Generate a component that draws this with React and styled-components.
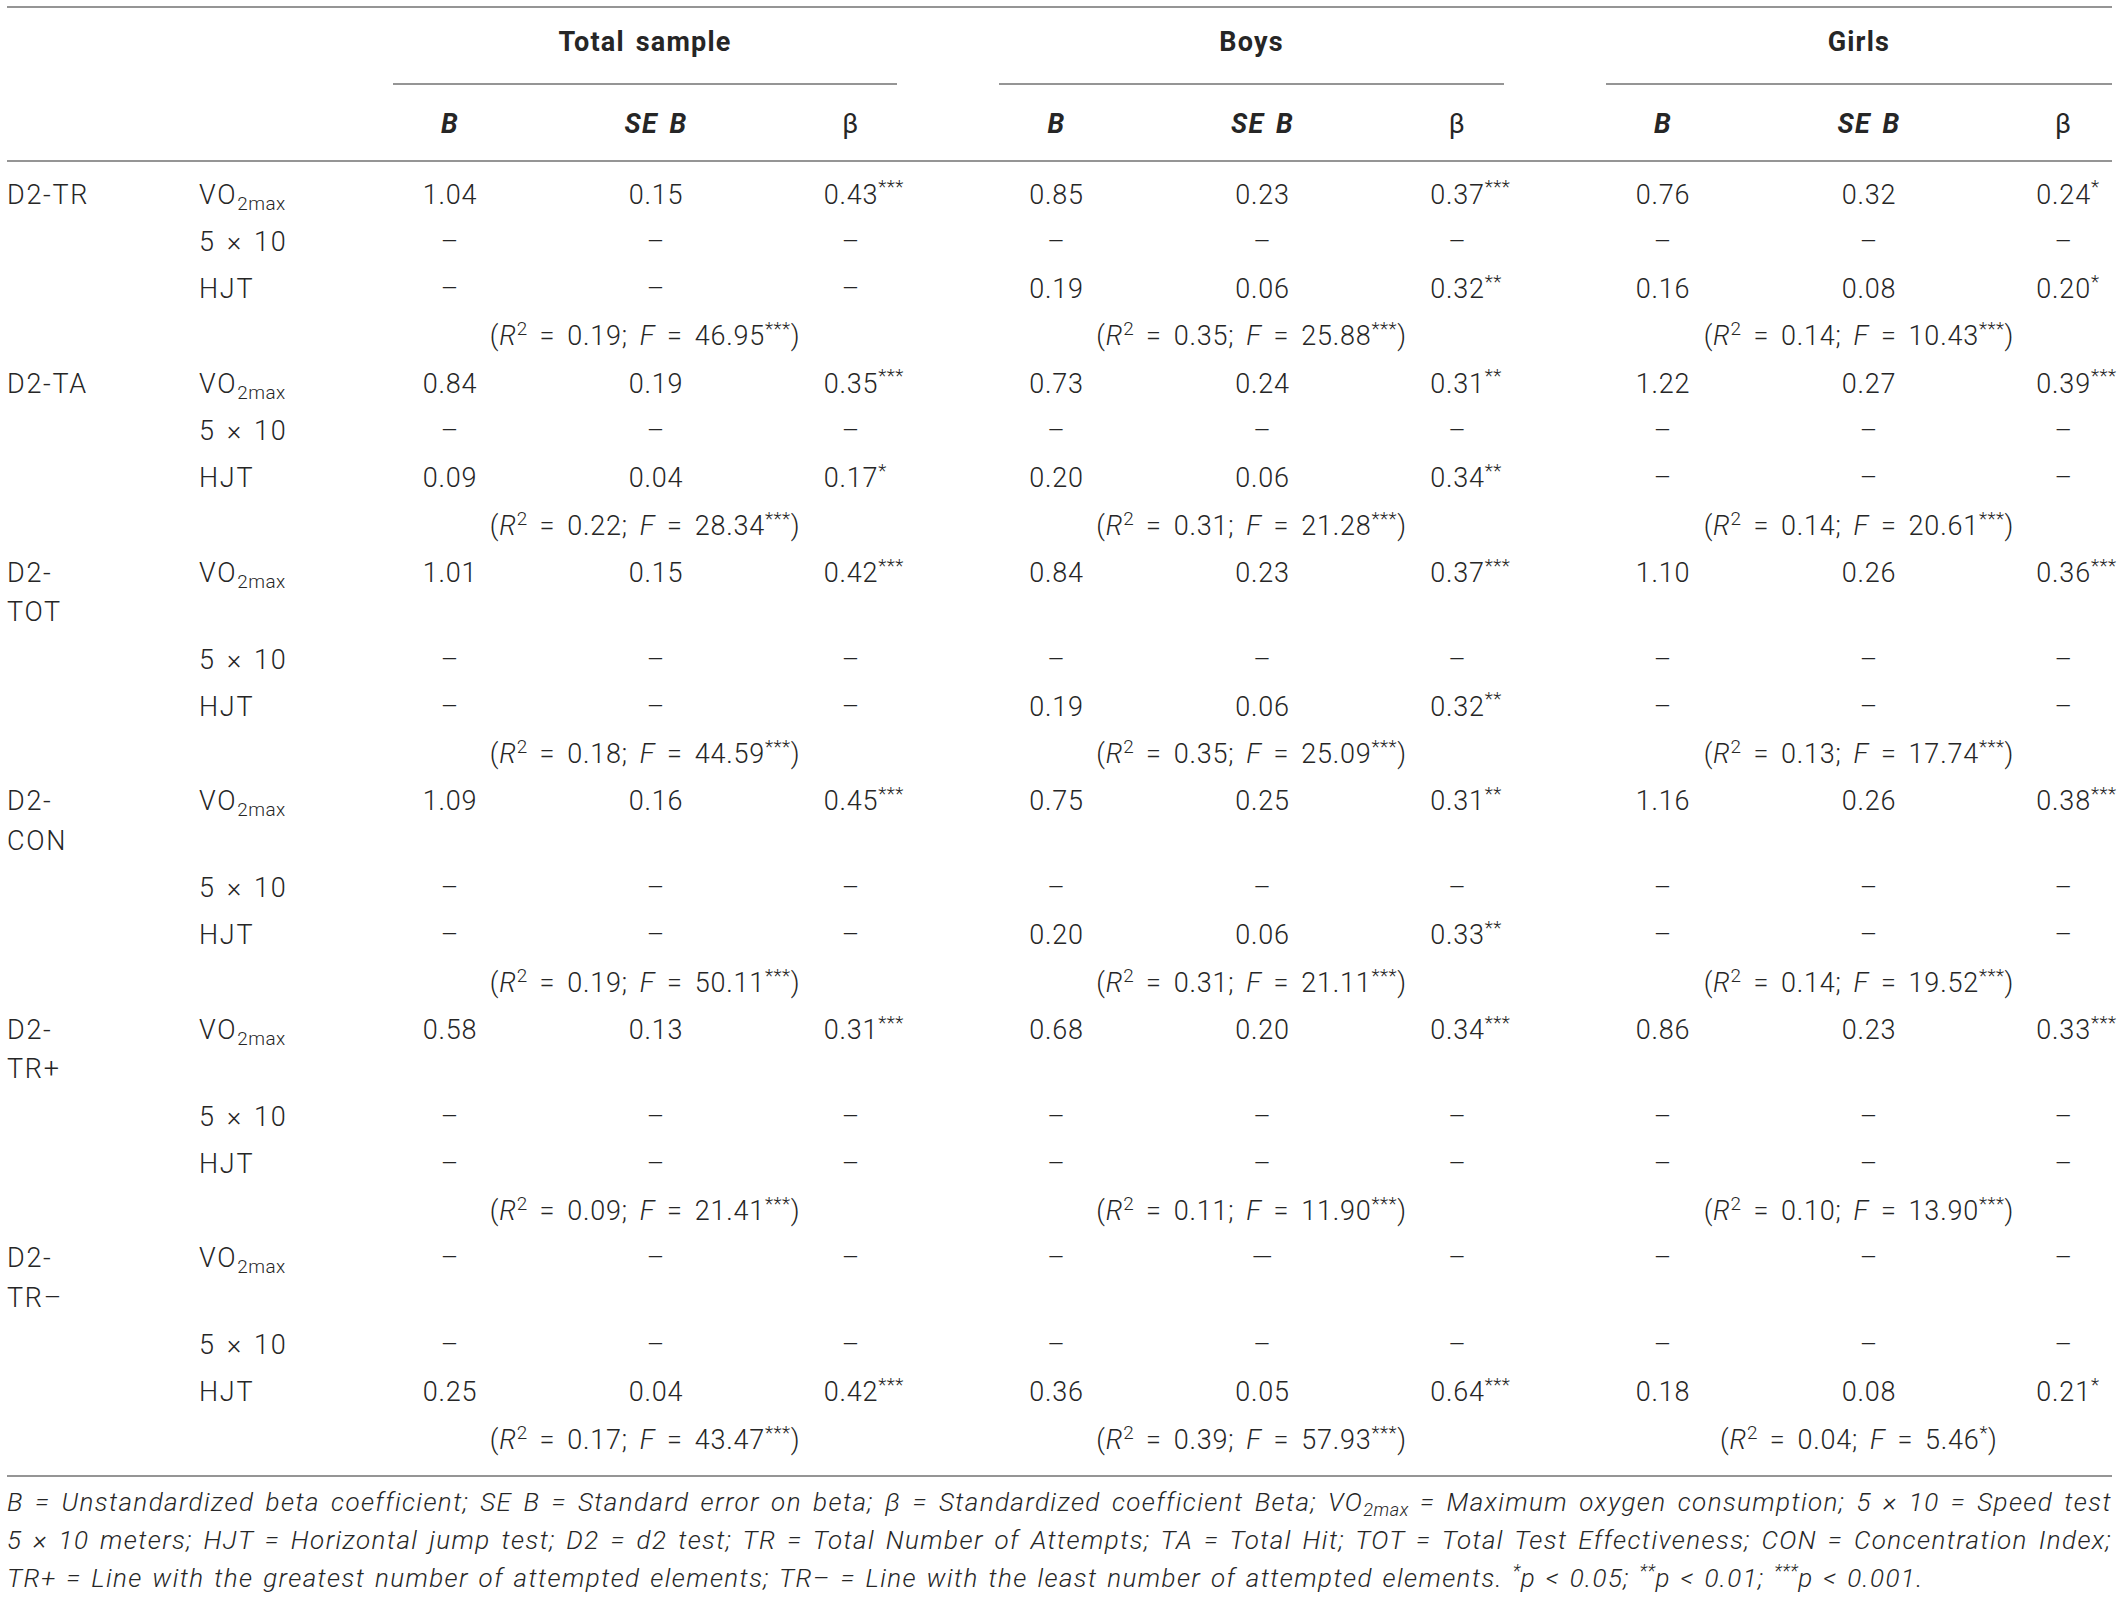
import React from 'react';
import styled, { createGlobalStyle, css } from 'styled-components';

const GlobalStyle = createGlobalStyle`
  html, body {
    margin: 0;
    padding: 0;
    background: #ffffff;
  }
  body {
    font-family: 'Roboto', 'Liberation Sans', Arial, sans-serif;
    font-weight: 300;
    color: #262626;
  }
`;

// column template shared by header and body: labels, then three groups of B / SE B / β
const columns = css`
  display: grid;
  grid-template-columns:
    192px 142.75px
    216.5px 195.5px 194.5px
    216.5px 195.5px 194.5px
    216.5px 195.5px 145.25px;
  align-items: start;
`;

const text = css`
  font-size: 27px;
  line-height: 39.3px;
  letter-spacing: 0.8px;
`;

const Page = styled.div`
  padding: 6px 0 0 7px;
  width: 2105px;
`;

const Head = styled.div`
  ${columns}
  border-top: 2px solid #959595;
  border-bottom: 2px solid #959595;
`;

const Body = styled.div`
  ${columns}
  padding: 10px 0 11px;
  border-bottom: 2px solid #959595;
`;

const Blank = styled.div`
  grid-column: ${(p) => p.$col} / span 1;
`;

const GroupTitle = styled.div`
  ${text}
  grid-column: span 3;
  margin: 0 ${(p) => (p.$last ? '0' : '51px')} 0 51px;
  padding: 15px 0 21px;
  border-bottom: 2px solid #959595;
  text-align: center;
  font-weight: 700;
  letter-spacing: 1.2px;
  word-spacing: 3px;
`;

const SubTitle = styled.div`
  ${text}
  padding: 20px 0 15px ${(p) => (p.$last ? '48.5px' : '0')};
  text-align: center;
  font-weight: ${(p) => (p.$plain ? 400 : 700)};
  font-style: ${(p) => (p.$plain ? 'normal' : 'italic')};
  letter-spacing: 1.5px;
  word-spacing: 3px;
`;

const Label = styled.div`
  ${text}
  grid-column: ${(p) => p.$col};
  padding: 4px 0;
  text-align: left;
  letter-spacing: 1.7px;
  word-spacing: 3px;
`;

const Value = styled.div`
  ${text}
  padding: 4px 0 4px ${(p) => (p.$last ? '48.5px' : '0')};
  text-align: center;
  white-space: nowrap;
`;

const Stars = styled.span`
  display: inline-block;
  width: 0;
  font-size: 0.7em;
  line-height: 0;
  letter-spacing: 0.5px;
  vertical-align: 0.55em;
  white-space: nowrap;
`;

const Fit = styled.div`
  ${text}
  grid-column: ${(p) => (p.$first ? '3 / span 3' : 'span 3')};
  padding: 4px ${(p) => (p.$last ? '0' : '51px')} 4px 51px;
  text-align: center;
  white-space: nowrap;
  word-spacing: 4.5px;
`;

const Sup = styled.sup`
  font-size: 0.7em;
  line-height: 0;
  vertical-align: 0.55em;
  letter-spacing: 0.5px;
`;

const Sub = styled.sub`
  font-size: 0.7em;
  line-height: 0;
  vertical-align: -0.3em;
  letter-spacing: 0.5px;
`;

const Notes = styled.div`
  padding-top: 6px;
  font-size: 26px;
  line-height: 38px;
  letter-spacing: 1.4px;
  word-spacing: 2px;
  font-style: italic;
`;

const NoteLine = styled.div`
  white-space: nowrap;
  text-align: ${(p) => (p.$end ? 'left' : 'justify')};
  text-align-last: ${(p) => (p.$end ? 'left' : 'justify')};
`;

const D = '–';
const dashes = [D, D, D, D, D, D, D, D, D];

const blocks = [
  {
    label: ['D2-TR'],
    vo2: ['1.04', '0.15', '0.43***', '0.85', '0.23', '0.37***', '0.76', '0.32', '0.24*'],
    speed: dashes,
    hjt: [D, D, D, '0.19', '0.06', '0.32**', '0.16', '0.08', '0.20*'],
    fits: [['0.19', '46.95', '***'], ['0.35', '25.88', '***'], ['0.14', '10.43', '***']],
  },
  {
    label: ['D2-TA'],
    vo2: ['0.84', '0.19', '0.35***', '0.73', '0.24', '0.31**', '1.22', '0.27', '0.39***'],
    speed: dashes,
    hjt: ['0.09', '0.04', '0.17*', '0.20', '0.06', '0.34**', D, D, D],
    fits: [['0.22', '28.34', '***'], ['0.31', '21.28', '***'], ['0.14', '20.61', '***']],
  },
  {
    label: ['D2-', 'TOT'],
    vo2: ['1.01', '0.15', '0.42***', '0.84', '0.23', '0.37***', '1.10', '0.26', '0.36***'],
    speed: dashes,
    hjt: [D, D, D, '0.19', '0.06', '0.32**', D, D, D],
    fits: [['0.18', '44.59', '***'], ['0.35', '25.09', '***'], ['0.13', '17.74', '***']],
  },
  {
    label: ['D2-', 'CON'],
    vo2: ['1.09', '0.16', '0.45***', '0.75', '0.25', '0.31**', '1.16', '0.26', '0.38***'],
    speed: dashes,
    hjt: [D, D, D, '0.20', '0.06', '0.33**', D, D, D],
    fits: [['0.19', '50.11', '***'], ['0.31', '21.11', '***'], ['0.14', '19.52', '***']],
  },
  {
    label: ['D2-', 'TR+'],
    vo2: ['0.58', '0.13', '0.31***', '0.68', '0.20', '0.34***', '0.86', '0.23', '0.33***'],
    speed: dashes,
    hjt: dashes,
    fits: [['0.09', '21.41', '***'], ['0.11', '11.90', '***'], ['0.10', '13.90', '***']],
  },
  {
    label: ['D2-', 'TR–'],
    vo2: [D, D, D, D, '—', D, D, D, D],
    speed: dashes,
    hjt: ['0.25', '0.04', '0.42***', '0.36', '0.05', '0.64***', '0.18', '0.08', '0.21*'],
    fits: [['0.17', '43.47', '***'], ['0.39', '57.93', '***'], ['0.04', '5.46', '*']],
  },
];

const VO2 = () => (
  <>
    VO<Sub>2max</Sub>
  </>
);

const Cells = ({ values }) =>
  values.map((v, i) => {
    const [, num, stars] = v.match(/^([^*]*)(\**)$/);
    return (
      <Value key={i} $last={i === 8}>
        {num}
        {stars && <Stars>{stars}</Stars>}
      </Value>
    );
  });

const Block = ({ block }) => (
  <>
    <Label $col={1}>
      {block.label.map((l) => (
        <div key={l}>{l}</div>
      ))}
    </Label>
    <Label $col={2}>
      <VO2 />
    </Label>
    <Cells values={block.vo2} />
    <Label $col={2}>5 × 10</Label>
    <Cells values={block.speed} />
    <Label $col={2}>HJT</Label>
    <Cells values={block.hjt} />
    {block.fits.map(([r2, f, stars], i) => (
      <Fit key={i} $first={i === 0} $last={i === 2}>
        (<i>R</i>
        <Sup>2</Sup> = {r2}; <i>F</i> = {f}
        <Sup>{stars}</Sup>)
      </Fit>
    ))}
  </>
);

const groups = ['Total sample', 'Boys', 'Girls'];

const App = () => (
  <Page>
    <GlobalStyle />
    <Head>
      <Blank $col={1} />
      <Blank $col={2} />
      {groups.map((g, i) => (
        <GroupTitle key={g} $last={i === 2}>
          {g}
        </GroupTitle>
      ))}
      <Blank $col={1} />
      <Blank $col={2} />
      {groups.map((g, i) => (
        <React.Fragment key={g}>
          <SubTitle>B</SubTitle>
          <SubTitle>SE B</SubTitle>
          <SubTitle $plain $last={i === 2}>
            β
          </SubTitle>
        </React.Fragment>
      ))}
    </Head>
    <Body>
      {blocks.map((b) => (
        <Block key={b.label.join('')} block={b} />
      ))}
    </Body>
    <Notes>
      <NoteLine>
        B = Unstandardized beta coefficient; SE B = Standard error on beta; β = Standardized coefficient
        Beta; VO<Sub>2max</Sub> = Maximum oxygen consumption; 5 × 10 = Speed test
      </NoteLine>
      <NoteLine>
        5 × 10 meters; HJT = Horizontal jump test; D2 = d2 test; TR = Total Number of Attempts; TA =
        Total Hit; TOT = Total Test Effectiveness; CON = Concentration Index;
      </NoteLine>
      <NoteLine $end>
        TR+ = Line with the greatest number of attempted elements; TR– = Line with the least number of
        attempted elements. <Sup>*</Sup>p &lt; 0.05; <Sup>**</Sup>p &lt; 0.01; <Sup>***</Sup>p &lt; 0.001.
      </NoteLine>
    </Notes>
  </Page>
);

export default App;
